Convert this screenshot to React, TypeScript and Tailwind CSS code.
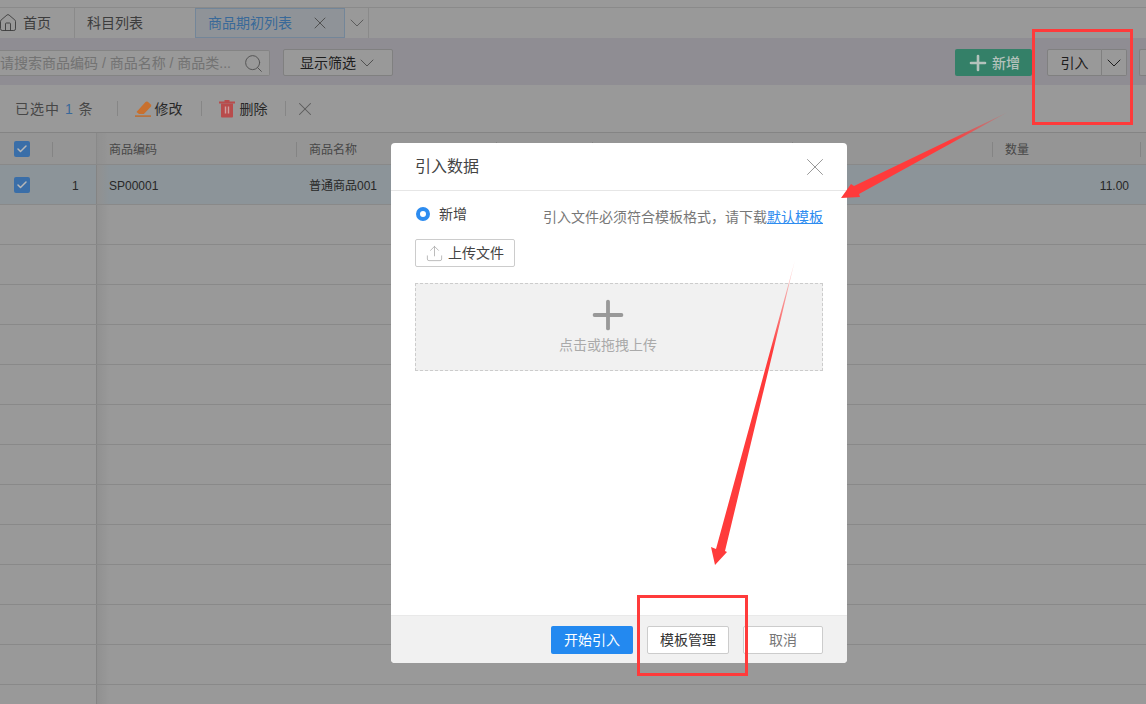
import React from 'react';
import { Home, X, ChevronDown, Search, Plus, Upload, Check } from 'lucide-react';

const rowCount = 14;

function Checkbox() {
  return (
    <span className="relative z-10 flex h-4 w-4 items-center justify-center rounded-[2px] bg-[#3a6ea8]">
      <Check className="h-3 w-3 text-[#b8b8b8]" strokeWidth={3} />
    </span>
  );
}

function Sep({ className }: { className: string }) {
  return <span className={`absolute top-[9px] h-[15px] w-px bg-[#dddddd] ${className}`} />;
}

function TabBar() {
  return (
    <div className="mt-[7px] flex h-[31px] border-t border-[#e6e6e6] bg-white text-sm text-[#666666]">
      <div className="flex w-[75px] shrink-0 items-center border-r border-[#e6e6e6]">
        <Home className="h-[20px] w-[20px] shrink-0 -translate-x-[2px] text-[#666666]" strokeWidth={1.1} />
        <span className="ml-[3px]">首页</span>
      </div>
      <div className="flex w-[120px] shrink-0 items-center pl-[12px]">科目列表</div>
      <div className="flex w-[150px] shrink-0 items-center border border-[#c0e0ff] bg-[#eef6fd] pl-[12px] text-[#5fb0ff]">
        <span>商品期初列表</span>
        <X className="ml-[18px] h-[20px] w-[20px] shrink-0 text-[#888888]" strokeWidth={1.2} />
      </div>
      <div className="flex w-[24px] shrink-0 items-center justify-center border-r border-[#e6e6e6]">
        <ChevronDown className="h-[24px] w-[24px] shrink-0 text-[#999999]" strokeWidth={1} />
      </div>
    </div>
  );
}

function Toolbar() {
  return (
    <div className="flex h-[47px] items-start bg-[#eeebf5] pt-[11px] text-sm">
      <div className="mt-[1px] flex h-[26px] w-[270px] shrink-0 items-center rounded-r-[2px] border border-l-0 border-[#dddddd] bg-white pr-[5px] text-[#c0c0c0]">
        <span className="flex-1 truncate">请搜索商品编码 / 商品名称 / 商品类...</span>
        <Search className="h-[21px] w-[21px] shrink-0 text-[#888888]" strokeWidth={1.1} />
      </div>
      <div className="ml-[13px] flex h-[27px] w-[110px] shrink-0 items-center rounded-[2px] border border-[#d5d5d5] bg-white pl-[16px] text-[#333333]">
        显示筛选
        <ChevronDown className="ml-[-1px] h-[24px] w-[24px] shrink-0 text-[#888888]" strokeWidth={1} />
      </div>
      <div className="relative z-10 ml-[562px] flex h-[27px] w-[77px] shrink-0 items-center justify-center rounded-[2px] bg-[#348068] font-medium text-[#b4c2bc]">
        <Plus className="mr-[1px] h-[24px] w-[24px] shrink-0 -translate-x-[1px]" strokeWidth={2.6} />
        新增
      </div>
      <div className="ml-[15px] flex h-[27px] w-[55px] shrink-0 items-center justify-center rounded-l-[2px] border border-[#d5d5d5] bg-white text-[#333333]">
        引入
      </div>
      <div className="flex h-[27px] w-[25px] shrink-0 items-center justify-center rounded-r-[2px] border border-l-0 border-[#d5d5d5] bg-white">
        <ChevronDown className="h-[24px] w-[24px] shrink-0 text-[#333333]" strokeWidth={1} />
      </div>
      <div className="ml-[12px] h-[27px] w-[7px] shrink-0 rounded-l-[2px] border border-r-0 border-[#d5d5d5] bg-white" />
    </div>
  );
}

function ActionBar() {
  return (
    <div className="flex h-[48px] items-center border-b border-[#dcdcdc] bg-white pl-[15px] text-sm text-[#444444]">
      <span className="tracking-[1px] text-[#777777]">
        已选中 <span className="text-[#5fb0ff]">1</span> 条
      </span>
      <span className="ml-[23px] h-[15px] w-px bg-[#e0e0e0]" />
      <svg className="relative z-10 ml-[17px] h-[17px] w-[17px]" viewBox="0 0 17 17">
        <path d="M1.5 12 10.5 2 Q11.5 1 12.8 1.8 L15.8 4.4 Q16.8 5.6 15.8 6.8 L8.8 14 H4 Z" fill="#c8702e" />
        <rect x="0" y="15.4" width="16" height="1.4" fill="#c06a28" />
      </svg>
      <span className="ml-[3px]">修改</span>
      <span className="ml-[18px] h-[15px] w-px bg-[#e0e0e0]" />
      <svg className="relative z-10 ml-[17px] h-[18px] w-[16px]" viewBox="0 0 16 18">
        <rect x="0" y="1.5" width="16" height="2" fill="#b84c4c" />
        <rect x="5.5" y="0" width="5" height="2" fill="#b84c4c" />
        <path d="M2 3.5H14V16.5Q14 17.5 13 17.5H3Q2 17.5 2 16.5Z" fill="#b84c4c" />
        <rect x="5.8" y="6.5" width="1.4" height="7" fill="#cfa0a0" />
        <rect x="8.8" y="6.5" width="1.4" height="7" fill="#cfa0a0" />
      </svg>
      <span className="ml-[5px]">删除</span>
      <span className="ml-[17px] h-[15px] w-px bg-[#e0e0e0]" />
      <X className="ml-[8px] h-[22px] w-[22px] shrink-0 text-[#999999]" strokeWidth={1.1} />
    </div>
  );
}

function FixedShadow() {
  return <div className="h-full w-[12px] shrink-0 bg-gradient-to-r from-[#f1f1f1] to-transparent" />;
}

function TableHead() {
  return (
    <div className="relative flex h-[32px] border-b border-[#e4e4e4] bg-[#f9f9f9] text-xs text-[#777777]">
      <div className="flex w-[97px] shrink-0 items-center border-r border-[#e4e4e4] pl-[14px]">
        <Checkbox />
      </div>
      <FixedShadow />
      <div className="flex flex-1 items-center pt-[3px]">
        <span className="w-[200px]">商品编码</span>
        <span>商品名称</span>
        <span className="ml-[648px]">数量</span>
      </div>
      <Sep className="left-[52px]" />
      <Sep className="left-[296px]" />
      <Sep className="left-[496px]" />
      <Sep className="left-[592px]" />
      <Sep className="left-[792px]" />
      <Sep className="left-[992px]" />
      <Sep className="left-[1140px]" />
    </div>
  );
}

function TableRows() {
  return (
    <div>
      <div className="flex h-[40px] border-b border-[#e4e4e4] bg-[#eaf7ff] text-xs text-[#444444]">
        <div className="flex w-[97px] shrink-0 items-center border-r border-[#dcdcdc] pl-[14px]">
          <Checkbox />
          <span className="ml-[42px] pt-[2px]">1</span>
        </div>
        <FixedShadow />
        <div className="flex flex-1 items-center pt-[2px]">
          <span className="w-[200px]">SP00001</span>
          <span>普通商品001</span>
          <span className="ml-auto mr-[17px]">11.00</span>
        </div>
      </div>
      {Array.from({ length: rowCount }).map((_, i) => (
        <div key={i} className="flex h-[40px] border-b border-[#e4e4e4] bg-white">
          <div className="w-[97px] shrink-0 border-r border-[#dcdcdc]" />
          <FixedShadow />
        </div>
      ))}
    </div>
  );
}

function ImportDialog() {
  return (
    <div className="absolute left-[391px] top-[143px] z-20 flex h-[520px] w-[456px] flex-col overflow-hidden rounded-[4px] bg-white text-sm">
      <div className="flex h-[48px] shrink-0 items-center justify-between border-b border-[#e6e6e6] pl-[24px] pr-[17px]">
        <span className="text-base text-[#444444]">引入数据</span>
        <X className="h-[30px] w-[30px] shrink-0 text-[#999999]" strokeWidth={0.8} />
      </div>
      <div className="flex-1 px-[24px]">
        <div className="flex h-[48px] justify-between">
          <label className="flex h-[46px] items-center text-[#444444]">
            <span className="ml-[1px] h-[14px] w-[14px] rounded-full border-[4px] border-[#2d8cf0] bg-white" />
            <span className="ml-[9px]">新增</span>
          </label>
          <p className="mt-[16px] text-[#777777]">
            引入文件必须符合模板格式，请下载
            <span className="text-[#2d8cf0] underline">默认模板</span>
          </p>
        </div>
        <button className="flex h-[28px] w-[100px] items-center rounded-[2px] border border-[#cccccc] pl-[9px] text-[#444444]">
          <Upload className="h-[19px] w-[19px] shrink-0 text-[#aaaaaa]" strokeWidth={1} />
          <span className="ml-[4px]">上传文件</span>
        </button>
        <div className="mt-[16px] flex h-[88px] flex-col items-center border border-dashed border-[#cccccc] bg-[#f1f1f1] pr-[22px] pt-[8px] text-[#aaaaaa]">
          <Plus className="h-[46px] w-[46px] shrink-0 text-[#999999]" strokeWidth={2} />
          <span className="-mt-[3px]">点击或拖拽上传</span>
        </div>
      </div>
      <div className="flex h-[48px] shrink-0 items-center justify-end gap-[14px] border-t border-[#e9e9e9] bg-[#f1f1f1] pr-[24px]">
        <button className="h-[28px] w-[82px] rounded-[2px] bg-[#2389f0] text-white">开始引入</button>
        <button className="h-[28px] w-[82px] rounded-[2px] border border-[#cccccc] bg-white text-[#333333]">模板管理</button>
        <button className="h-[28px] w-[80px] rounded-[2px] border border-[#cccccc] bg-white text-[#777777]">取消</button>
      </div>
    </div>
  );
}

function Annotations() {
  return (
    <>
      <div className="absolute left-[1032px] top-[29px] z-30 h-[96px] w-[101px] border-[3px] border-[#ff3b3b]" />
      <div className="absolute left-[637px] top-[595px] z-30 h-[81px] w-[111px] border-[3px] border-[#ff3b3b]" />
      <svg className="absolute left-0 top-0 z-30 h-[704px] w-[1146px]" viewBox="0 0 1146 704">
        <defs>
          <linearGradient id="tail1" x1="1008" y1="112" x2="950" y2="142" gradientUnits="userSpaceOnUse">
            <stop offset="0" stopColor="#ff3b3b" stopOpacity="0.1" />
            <stop offset="1" stopColor="#ff3b3b" />
          </linearGradient>
          <linearGradient id="tail2" x1="795" y1="260" x2="770" y2="350" gradientUnits="userSpaceOnUse">
            <stop offset="0" stopColor="#ff3b3b" stopOpacity="0.1" />
            <stop offset="1" stopColor="#ff3b3b" />
          </linearGradient>
        </defs>
        <polygon points="1008,112 854,186 851,184 841,198 860,197 859,194" fill="url(#tail1)" />
        <polygon points="795,260 716,549 711,547 715,565 727,552 725,551" fill="url(#tail2)" />
      </svg>
    </>
  );
}

export default function App() {
  return (
    <div className="relative h-[704px] w-[1146px] overflow-hidden bg-white font-['Liberation_Sans','Noto_Sans_CJK_SC',sans-serif]">
      <TabBar />
      <Toolbar />
      <ActionBar />
      <TableHead />
      <TableRows />
      <div className="absolute inset-0 bg-black/40" />
      <ImportDialog />
      <Annotations />
    </div>
  );
}
